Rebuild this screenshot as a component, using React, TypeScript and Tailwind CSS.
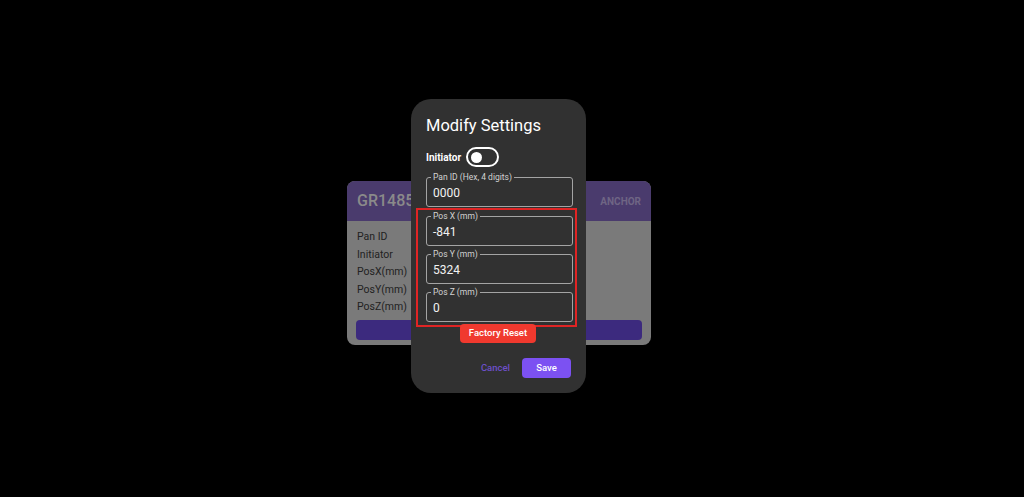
import React from 'react';

const font = { fontFamily: 'Roboto, "Liberation Sans", sans-serif' };

const rows = ['Pan ID', 'Initiator', 'PosX(mm)', 'PosY(mm)', 'PosZ(mm)'];

function Field({ label, value }: { label: string; value: string }) {
  return (
    <fieldset className="h-[34px] w-[147px] rounded-[3px] border border-[#a4a4a4] pl-[4px] pr-[6px]">
      <legend className="px-[2px] text-[8.5px] leading-[9px] text-[#d2d2d2]">{label}</legend>
      <div className="pl-[2px] pt-[4px] text-[12px] leading-[14px] text-[#f2f2f2]">{value}</div>
    </fieldset>
  );
}

export default function App() {
  return (
    <div className="relative h-[497px] w-full overflow-hidden bg-black" style={font}>
      <div className="pl-[347px] pt-[181px]">
        <div className="w-[304px] h-[164px] overflow-hidden rounded-[8px] bg-[#7a7a7a]">
          <div className="flex h-[40px] items-center justify-between bg-[#4a3b6d] px-[10px]">
            <span className="text-[16px] font-medium text-[#8a8a8a]">GR1485</span>
            <span className="text-[10px] font-bold text-[#6f6584]">ANCHOR</span>
          </div>
          <div className="flex flex-col gap-[5px] px-[10px] pt-[10px] text-[10.5px] leading-[12.5px] text-[#222222]">
            {rows.map((r) => (
              <div key={r}>{r}</div>
            ))}
          </div>
          <div className="mx-[9px] mt-[6px] h-[20px] rounded-[4px] bg-[#3c2a7e]" />
        </div>
      </div>

      <div className="absolute left-[411px] top-[99px] flex h-[294px] w-[175px] flex-col rounded-[20px] bg-[#313131] pl-[15px] pr-[14px] pt-[17px]">
        <h2 className="text-[16.5px] leading-[20px] text-white">Modify Settings</h2>
        <div className="mt-[11px] flex items-center">
          <span className="w-[40px] text-[10px] font-bold text-white">Initiator</span>
          <div className="flex h-[20px] w-[33px] items-center rounded-full border-[2px] border-white px-[3px]">
            <div className="h-[11px] w-[11px] rounded-full bg-white" />
          </div>
        </div>
        <div className="mt-[6px]">
          <Field label="Pan ID (Hex, 4 digits)" value="0000" />
        </div>
        <div className="-ml-[10px] mt-[1px] flex w-[161px] flex-col gap-[4px] border-[2px] border-[#e02424] px-[8px] pb-[3px] pt-[2px]">
          <Field label="Pos X (mm)" value="-841" />
          <Field label="Pos Y (mm)" value="5324" />
          <Field label="Pos Z (mm)" value="0" />
        </div>
        <div className="-mt-[3px] flex justify-center pr-[2px]">
          <button className="h-[19px] rounded-[4px] bg-[#f0392e] px-[9px] text-[9.5px] font-medium text-white">
            Factory Reset
          </button>
        </div>
        <div className="mt-[15px] flex items-center justify-end gap-[12px] pr-[1px]">
          <span className="text-[9.5px] font-medium text-[#6d4fc9]">Cancel</span>
          <button className="h-[20px] w-[49px] rounded-[4px] bg-[#7c51f2] text-[9.5px] font-medium text-white">
            Save
          </button>
        </div>
      </div>
    </div>
  );
}
